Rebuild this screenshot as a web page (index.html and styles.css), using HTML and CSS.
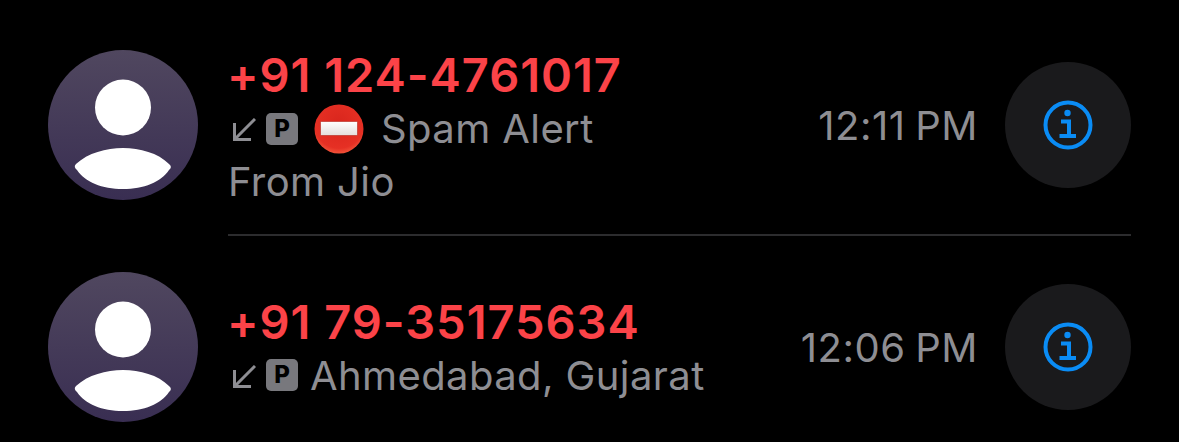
FILE: index.html
```html
<!DOCTYPE html>
<html lang="en">
<head>
<meta charset="utf-8">
<title>Recents</title>
<link rel="stylesheet" href="styles.css">
</head>
<body>
<svg class="defs" width="0" height="0" aria-hidden="true">
  <defs>
    <linearGradient id="avatarFill" x1="0" y1="0" x2="0" y2="1">
      <stop offset="0" stop-color="#50475f"/>
      <stop offset="1" stop-color="#392e52"/>
    </linearGradient>
    <radialGradient id="stopFill" cx="0.5" cy="0.38" r="0.64">
      <stop offset="0" stop-color="#d9261d"/>
      <stop offset="0.8" stop-color="#e63024"/>
      <stop offset="1" stop-color="#f4583c"/>
    </radialGradient>
    <linearGradient id="barFill" x1="0" y1="0" x2="0" y2="1">
      <stop offset="0" stop-color="#ffffff"/>
      <stop offset="1" stop-color="#e4dedc"/>
    </linearGradient>
    <symbol id="avatar" viewBox="0 0 150 150">
      <circle cx="75" cy="75" r="75" fill="url(#avatarFill)"/>
      <circle cx="75" cy="57.500" r="28" fill="#fff"/>
      <path d="M28 114 C40 103 58 98 75 98 C92 98 110 103 121 114 C123.500 116 123.500 118 121 120 C113 132 96 139 75 139 C54 139 37 132 29 120 C26.500 118 26 116 28 114 Z" fill="#fff"/>
    </symbol>
    <symbol id="incoming" viewBox="0 0 24 24">
      <path d="M23 1 L2.500 21.500 M2.500 5 V21.500 H19" fill="none" stroke="currentColor" stroke-width="3"/>
    </symbol>
    <symbol id="info" viewBox="0 0 50 50">
      <circle cx="25" cy="25" r="22.500" fill="none" stroke="currentColor" stroke-width="4"/>
      <circle cx="24.500" cy="13" r="3.200" fill="currentColor"/>
      <path d="M18 21.500 H26 V35.500 M16.500 36 H33" fill="none" stroke="currentColor" stroke-width="4"/>
    </symbol>
    <symbol id="no-entry" viewBox="0 0 50 50">
      <circle cx="25" cy="25" r="24.500" fill="url(#stopFill)"/>
      <rect x="6.500" y="17.500" width="37" height="14" rx="1" fill="url(#barFill)" stroke="#b3251b" stroke-width="0.600"/>
    </symbol>
  </defs>
</svg>

<ul class="calls">
  <li class="call">
    <svg class="avatar"><use href="#avatar"/></svg>
    <div class="details">
      <div class="info-text info-text-tall">
        <div class="number">+91 124-4761017</div>
        <div class="meta">
          <svg class="arrow"><use href="#incoming"/></svg>
          <span class="badge">P</span>
          <svg class="emoji"><use href="#no-entry"/></svg>
          <span class="label">Spam Alert</span>
        </div>
        <div class="meta source">From Jio</div>
      </div>
      <time class="time">12:11 PM</time>
      <button class="info-button" type="button" aria-label="Info"><svg class="info-icon"><use href="#info"/></svg></button>
    </div>
  </li>
  <li class="divider" role="separator"></li>
  <li class="call">
    <svg class="avatar"><use href="#avatar"/></svg>
    <div class="details">
      <div class="info-text">
        <div class="number">+91 79-35175634</div>
        <div class="meta">
          <svg class="arrow"><use href="#incoming"/></svg>
          <span class="badge">P</span>
          <span class="label label-tight">Ahmedabad, Gujarat</span>
        </div>
      </div>
      <time class="time">12:06 PM</time>
      <button class="info-button" type="button" aria-label="Info"><svg class="info-icon"><use href="#info"/></svg></button>
    </div>
  </li>
</ul>
</body>
</html>
```
FILE: styles.css
```css
* { box-sizing: border-box; }

html, body {
  margin: 0;
  height: 442px;
  overflow: hidden;
  background: #000;
}

body {
  font-family: Inter, "Liberation Sans", sans-serif;
}

.defs { position: absolute; }

.calls {
  list-style: none;
  margin: 0;
  padding: 16px 48px 0;
  display: flex;
  flex-direction: column;
}

.call {
  height: 218px;
  display: flex;
  align-items: center;
  gap: 31px;
}

.avatar {
  width: 150px;
  height: 150px;
  flex: none;
}

.details {
  flex: 1;
  display: flex;
  align-items: center;
}

.info-text {
  flex: 1;
  display: flex;
  flex-direction: column;
  padding-top: 2px;
}

.info-text-tall { padding-top: 6px; }

.number {
  font-size: 47px;
  line-height: 54px;
  font-weight: 600;
  color: #fb4348;
  letter-spacing: 0.95px;
  margin-left: -2px;
  white-space: nowrap;
}

.meta {
  display: flex;
  align-items: center;
  height: 53px;
  font-size: 40px;
  letter-spacing: 0.4px;
  color: #8e8e93;
  white-space: nowrap;
}

.source { margin-left: -1px; }

.arrow {
  width: 24px;
  height: 24px;
  margin: 3px 10px 0 3px;
  flex: none;
}

.badge {
  width: 32px;
  height: 32px;
  border-radius: 5px;
  background: #78787d;
  color: #000;
  font-size: 24px;
  line-height: 32px;
  font-weight: 800;
  letter-spacing: 0;
  text-align: center;
  flex: none;
}

.emoji {
  width: 50px;
  height: 50px;
  margin-left: 16px;
  flex: none;
}

.label { margin-left: 17px; }
.label-tight { margin-left: 12px; }

.time {
  font-size: 40px;
  letter-spacing: 0.5px;
  word-spacing: -2px;
  color: #8e8e93;
  margin-right: 27px;
  white-space: nowrap;
}

.info-button {
  width: 126px;
  height: 126px;
  border: 0;
  border-radius: 50%;
  padding: 0;
  background: #1a1a1c;
  color: #0a8cf5;
  display: flex;
  align-items: center;
  justify-content: center;
  flex: none;
}

.info-icon {
  width: 50px;
  height: 50px;
}

.divider {
  height: 2px;
  margin-left: 180px;
  background: #2c2c2e;
  margin-bottom: 2px;
}
```
